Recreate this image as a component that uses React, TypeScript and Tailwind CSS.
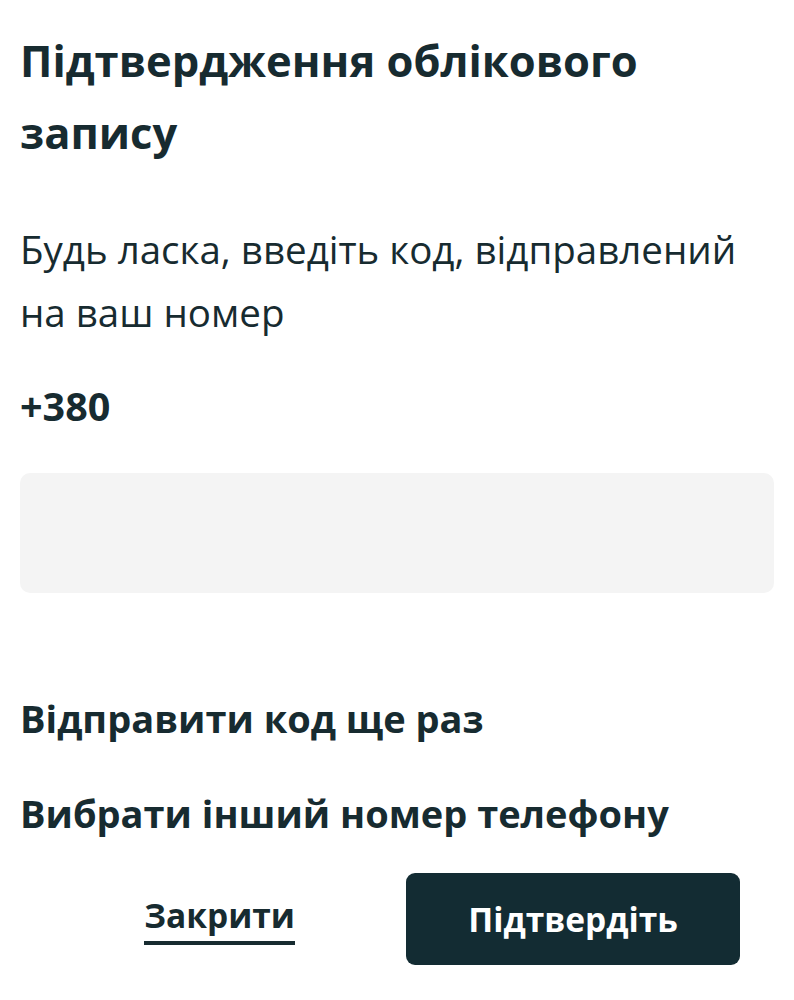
import React from "react";

export default function App() {
  return (
    <div className="w-[794px] h-[1000px] bg-white text-[#172b30] overflow-hidden" style={{ fontFamily: '"Open Sans", "Noto Sans", sans-serif' }}>
      <div className="px-5 pt-[25px]">
        <h1 className="text-[43.5px] leading-[72px] font-bold">Підтвердження облікового запису</h1>
        <p className="mt-[49px] text-[38.5px] leading-[63px] font-normal">Будь ласка, введіть код, відправлений на ваш номер</p>
        <p className="mt-[37px] text-[39.5px] leading-[50px] font-bold">+380</p>
        <div className="mt-[42px] h-[120px] w-full rounded-[10px] bg-[#f4f4f4]"></div>
        <p className="mt-[100px] text-[38px] leading-[50px] font-bold">Відправити код ще раз</p>
        <p className="mt-[45px] text-[38px] leading-[50px] font-bold">Вибрати інший номер телефону</p>
        <div className="mt-[35px] flex items-center justify-end gap-[111px] pr-[34px]">
          <span className="text-[33.5px] font-bold leading-[44px] border-b-4 border-[#172b30] pb-[4px]">Закрити</span>
          <button className="w-[334px] h-[92px] rounded-[9px] bg-[#132c33] text-white text-[33.5px] font-bold">Підтвердіть</button>
        </div>
      </div>
    </div>
  );
}
